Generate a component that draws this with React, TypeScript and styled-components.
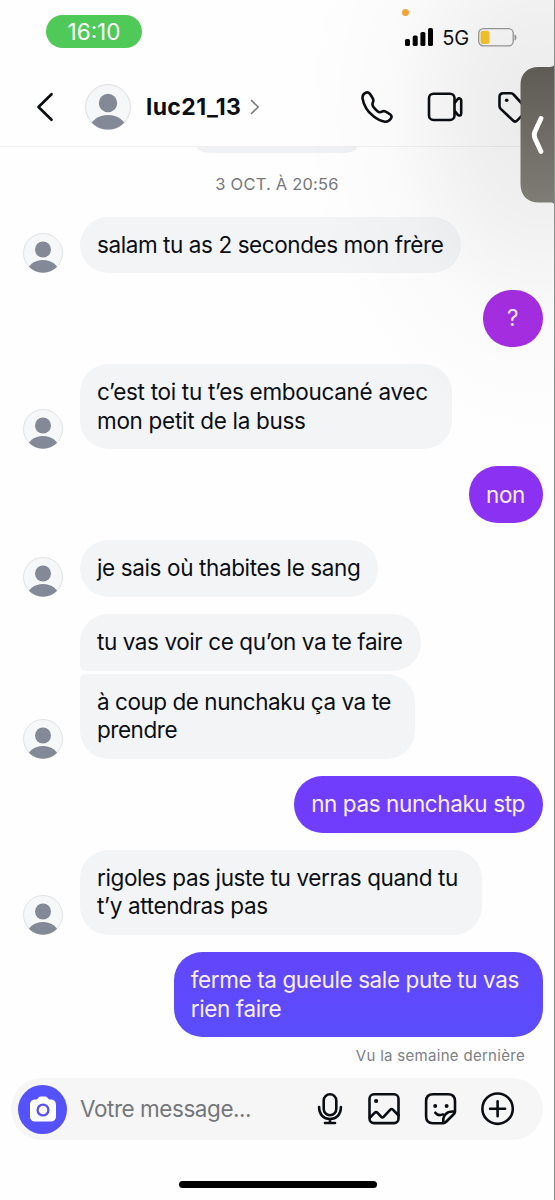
import React from "react";
import styled, { createGlobalStyle } from "styled-components";

const Global = createGlobalStyle`
  * { box-sizing: border-box; }
  body { margin: 0; background: #fefefe; }
`;

const Screen = styled.div`
  position: relative;
  width: 555px;
  height: 1200px;
  overflow: hidden;
  display: flex;
  flex-direction: column;
  background: #fefefe;
  border-right: 1px solid #8e8e8e;
  font-family: Inter, "Liberation Sans", sans-serif;
  color: #0b0f14;
`;

const StatusBar = styled.header`
  height: 66px;
  flex: none;
  display: flex;
  justify-content: space-between;
  align-items: flex-start;
  padding: 15px 37px 0 46px;
`;

const TimePill = styled.div`
  width: 96px;
  height: 33px;
  border-radius: 17px;
  background: #4fc957;
  color: #fff;
  font-size: 22.5px;
  line-height: 34px;
  text-align: center;
`;

const StatusIcons = styled.div`
  display: flex;
  align-items: center;
  height: 20px;
  margin-top: 12px;
`;

const Network = styled.span`
  font-size: 20px;
  line-height: 20px;
  letter-spacing: -0.2px;
  color: #111;
  margin: 1px 9px 0 9px;
`;

const ActivityDot = styled.i`
  position: absolute;
  left: 402px;
  top: 9px;
  width: 7px;
  height: 7px;
  border-radius: 50%;
  background: #f6a63a;
`;

const ChatHeader = styled.nav`
  height: 81px;
  flex: none;
  display: flex;
  align-items: center;
  border-bottom: 1px solid #f0f0f1;
  padding: 1px 0 0 36px;
`;

const HeaderAvatar = styled.div`
  width: 46px;
  height: 46px;
  margin-left: 31px;
`;

const Username = styled.h1`
  margin: 0 0 0 15px;
  width: 104px;
  font-size: 23px;
  font-weight: 700;
  line-height: 30px;
  letter-spacing: 0.4px;
  white-space: nowrap;
`;

const HeaderActions = styled.div`
  display: flex;
  align-items: center;
  gap: 32.5px;
  margin-left: 100px;
`;

const Thread = styled.main`
  flex: none;
  height: 930px;
  display: flex;
  flex-direction: column;
`;

const ClippedBubble = styled.div`
  width: 160px;
  height: 6px;
  margin-left: 197px;
  flex: none;
  border-radius: 0 0 14px 14px / 0 0 6px 6px;
  background: #f0f1f4;
`;

const DateLabel = styled.time`
  height: 63.5px;
  flex: none;
  padding-top: 20px;
  text-align: center;
  font-size: 16.5px;
  line-height: 22px;
  letter-spacing: 0.2px;
  color: #74777c;
`;

const Row = styled.div<{ $mine?: boolean; $gap?: number }>`
  display: flex;
  flex: none;
  align-items: flex-end;
  justify-content: ${(p) => (p.$mine ? "flex-end" : "flex-start")};
  padding: 0 11px 0 22.5px;
  margin-bottom: ${(p) => p.$gap ?? 17.4}px;
`;

const AvatarSlot = styled.div`
  width: 57.5px;
  height: 40px;
  flex: none;
`;

type Join = "top" | "bottom";

const Bubble = styled.div<{ $fill?: string; $join?: Join; $wrapped?: boolean }>`
  min-width: 60px;
  padding: 14.1px ${(p) => (p.$wrapped ? 24 : 18)}px 14.1px 17px;
  border-radius: 28.3px;
  ${(p) => p.$join === "bottom" && "border-bottom-left-radius: 6px;"}
  ${(p) => p.$join === "top" && "border-top-left-radius: 6px;"}
  background: ${(p) => p.$fill ?? "#f3f4f6"};
  color: ${(p) => (p.$fill ? "#fbeeff" : "#0b0f14")};
`;

const Line = styled.div<{ $track?: number; $center?: boolean }>`
  font-size: 22.5px;
  line-height: 28.3px;
  white-space: pre;
  text-align: ${(p) => (p.$center ? "center" : "left")};
  letter-spacing: ${(p) => p.$track ?? -0.4}px;
`;

const Seen = styled.div`
  padding-right: 29px;
  text-align: right;
  font-size: 15px;
  line-height: 20px;
  letter-spacing: 0.3px;
  margin-top: -8.5px;
  color: #7b7f86;
`;

const Composer = styled.footer`
  flex: none;
  height: 62px;
  margin: 1px 11px 0 11px;
  border-radius: 31px;
  background: #f6f6f6;
  display: flex;
  align-items: center;
  padding-left: 7px;
`;

const CameraButton = styled.div`
  width: 49px;
  height: 49px;
  border-radius: 50%;
  background: #5652fb;
  display: flex;
  align-items: center;
  justify-content: center;
`;

const Placeholder = styled.span`
  width: 243px;
  padding-left: 13px;
  font-size: 22.5px;
  line-height: 30px;
  letter-spacing: -0.45px;
  color: #74777c;
`;

const ComposerActions = styled.div`
  display: flex;
  align-items: center;
`;

const HomeIndicator = styled.div`
  width: 198px;
  height: 7px;
  flex: none;
  margin: 41px 0 0 179px;
  border-radius: 4px;
  background: #000;
`;

const Shade = styled.div`
  position: absolute;
  right: 0;
  top: 0;
  width: 260px;
  height: 500px;
  pointer-events: none;
  background: radial-gradient(ellipse 240px 335px at 245px 115px, rgba(0, 0, 0, 0.08), rgba(0, 0, 0, 0.056) 30%, rgba(0, 0, 0, 0.017) 62%, rgba(0, 0, 0, 0.004) 88%, transparent);
`;

const SideHandle = styled.div`
  position: absolute;
  right: -1px;
  top: 62px;
  width: 35px;
  height: 146px;
  svg { display: block; }
`;

const Avatar = ({ size }: { size: number }) => (
  <svg width={size} height={size} viewBox="0 0 46 46" display="block">
    <defs>
      <clipPath id={`face${size}`}>
        <circle cx="23" cy="23" r="22.6" />
      </clipPath>
    </defs>
    <circle cx="23" cy="23" r="22.4" fill="#f5f7f9" stroke="#dcdde0" strokeWidth="1" />
    <g fill="#838996" clipPath={`url(#face${size})`}>
      <circle cx="23" cy="19" r="9.2" />
      <ellipse cx="23" cy="45" rx="18" ry="14" />
    </g>
  </svg>
);

const stroke = {
  fill: "none",
  stroke: "#0a0e13",
  strokeWidth: 2.6,
  strokeLinecap: "round" as const,
  strokeLinejoin: "round" as const,
};

const Incoming = ({ lines, avatar = true, join, gap, track }: { lines: string[]; avatar?: boolean; join?: Join; gap?: number; track?: number }) => (
  <Row $gap={gap}>
    <AvatarSlot>{avatar && <Avatar size={40} />}</AvatarSlot>
    <Bubble $join={join} $wrapped={lines.length > 1}>
      {lines.map((l) => <Line key={l} $track={track}>{l}</Line>)}
    </Bubble>
  </Row>
);

const Outgoing = ({ lines, fill, track }: { lines: string[]; fill: string; track?: number }) => (
  <Row $mine>
    <Bubble $fill={fill} $wrapped={lines.length > 1}>
      {lines.map((l) => <Line key={l} $track={track} $center={lines.length === 1}>{l}</Line>)}
    </Bubble>
  </Row>
);

export default function App() {
  return (
    <Screen>
      <Global />
      <StatusBar>
        <TimePill>16:10</TimePill>
        <ActivityDot />
        <StatusIcons>
          <svg width="28" height="18" viewBox="0 0 28 18" fill="#000">
            <rect x="0" y="11" width="5" height="7" rx="1.6" />
            <rect x="7.7" y="7.5" width="5" height="10.5" rx="1.6" />
            <rect x="15.4" y="4" width="5" height="14" rx="1.6" />
            <rect x="23" y="0" width="5" height="18" rx="1.6" />
          </svg>
          <Network>5G</Network>
          <svg width="39" height="19" viewBox="0 0 39 19">
            <rect x="0.7" y="0.7" width="34.5" height="17.2" rx="4.6" fill="none" stroke="#9b9b9b" strokeWidth="1.3" />
            <rect x="2.5" y="2.7" width="9" height="13.2" rx="2.5" fill="#fac72e" />
            <path d="M36.5 6.2c2.6 1 2.6 5.4 0 6.4z" fill="#9b9b9b" />
          </svg>
        </StatusIcons>
      </StatusBar>
      <ChatHeader>
        <svg width="18" height="30" viewBox="0 0 18 30">
          <path d="M15.5 2.2 2.5 15l13 12.8" {...stroke} strokeWidth={2.7} />
        </svg>
        <HeaderAvatar><Avatar size={46} /></HeaderAvatar>
        <Username>luc21_13</Username>
        <svg width="10" height="16" viewBox="0 0 10 16">
          <path d="m1.6 1.6 6.6 6.4-6.6 6.4" {...stroke} stroke="#777" strokeWidth={1.5} />
        </svg>
        <HeaderActions>
          <svg width="34" height="34" viewBox="360 89.5 34 34">
            <path d="M365 92.600C363 93.800 362.200 95.600 362.600 98.200C363.800 105 367.800 111.200 373.200 115.600C377 118.700 381 120.700 385 121.200C387.500 121.500 389.300 120.400 390.800 118.300C392 116.600 391.800 115.300 390.300 114.100C388.900 113 387.400 111.900 385.700 111.100C384.300 110.400 383.200 110.500 381.900 111.200C380.100 112.200 379 112.100 377.500 110.800C375.900 109.400 374.500 107.900 373.300 106.200C372.200 104.600 372.100 103.500 372.900 101.900C373.600 100.500 373.600 99.400 372.800 98C371.900 96.300 371 94.800 369.900 93.400C368.600 91.800 366.900 91.500 365 92.600Z" {...stroke} />
          </svg>
          <svg width="38" height="34" viewBox="427 90 38 34">
            <rect x="429" y="93.7" width="25.5" height="26.3" rx="4.5" {...stroke} />
            <path d="M455 102.500l2.600-3.300c1.200-1.500 3.600-1 3.600 1.200v13c0 2.200-2.400 2.700-3.600 1.200l-2.600-3.300" {...stroke} />
          </svg>
          <svg width="34" height="34" viewBox="497 89.5 34 34">
            <path d="M499.500 96.500v9c0 1.200.3 2 1.200 2.900l12.600 11.800c1.200 1.100 2.600 1.100 3.700 0l9-9c1.100-1.200 1.100-2.500 0-3.700l-12-13c-.8-.9-1.700-1.800-2.900-1.800h-7.700c-2.400 0-3.900 1.400-3.900 3.800z" {...stroke} />
            <circle cx="506.700" cy="99.700" r="1.8" fill="#0a0e13" />
          </svg>
        </HeaderActions>
      </ChatHeader>
      <Thread>
        <ClippedBubble />
        <DateLabel>3 OCT. À 20:56</DateLabel>
        <Incoming lines={["salam tu as 2 secondes mon frère"]} track={-0.42} />
        <Outgoing lines={["?"]} fill="#a52ee2" />
        <Incoming lines={["c’est toi tu t’es emboucané avec", "mon petit de la buss"]} track={-0.3} />
        <Outgoing lines={["non"]} fill="#8b31f2" />
        <Incoming lines={["je sais où thabites le sang"]} track={-0.38} />
        <Incoming lines={["tu vas voir ce qu’on va te faire"]} avatar={false} join="bottom" gap={3.4} track={-0.42} />
        <Incoming lines={["à coup de nunchaku ça va te", "prendre"]} join="top" track={-0.46} />
        <Outgoing lines={["nn pas nunchaku stp"]} fill="#6f3dfb" />
        <Incoming lines={["rigoles pas juste tu verras quand tu", "t’y attendras pas"]} track={-0.38} />
        <Outgoing lines={["ferme ta gueule sale pute tu vas", "rien faire"]} fill="linear-gradient(#6246fb, #5b4dfc)" track={-0.39} />
        <Seen>Vu la semaine dernière</Seen>
      </Thread>
      <Composer>
        <CameraButton>
          <svg width="28" height="26" viewBox="0 0 28 26">
            <path d="M9 2.300C9.800 1 10.800.5 12 .5h4c1.200 0 2.200.5 3 1.800.6.900 1.200 1.200 2.200 1.200 3.800 0 5.800 1.800 5.800 5.500v11c0 3.600-1.800 5.500-5.500 5.500h-15C2.800 25.500 1 23.600 1 20V9c0-3.700 2-5.500 5.800-5.500 1 0 1.600-.3 2.200-1.200z" fill="#fff" />
            <circle cx="14" cy="14" r="5.400" fill="#fff" stroke="#5652fb" strokeWidth="2.3" />
          </svg>
        </CameraButton>
        <Placeholder>Votre message...</Placeholder>
        <ComposerActions>
          <svg width="210" height="50" viewBox="310 1084 210 50">
            <rect x="323.7" y="1094.2" width="12.6" height="21" rx="6.3" {...stroke} />
            <path d="M319.100 1107c0 7.500 4.500 12 10.900 12s10.900-4.500 10.900-12M330 1119.500v3.500M325 1123h10" {...stroke} />
            <rect x="369.5" y="1094.3" width="29" height="28.8" rx="4.5" {...stroke} />
            <path d="M370 1117.500l4.600-4.600c1-1 2-1 3 0l3.600 3.900c.8.900 1.600.9 2.400 0l6.500-7c1-1 2-1 3 0l5.500 5.700" {...stroke} />
            <circle cx="376.1" cy="1101" r="2.1" fill="#0a0e13" />
            <path d="M443.500 1123.200h-10.700c-4.600 0-6.700-2.400-6.700-7v-15c0-4.600 2.400-6.900 7-6.900h15c4.600 0 6.900 2.400 6.900 7v10.300c0 1-.4 1.700-1.100 2.400l-8 8c-.7.800-1.300 1.200-2.400 1.200zM443.300 1122.800c-.8-7 2.800-12 11-11.300M435.300 1112.700c1.700 2.300 4.600 2.900 7.600 1.700" {...stroke} />
            <circle cx="435.2" cy="1106" r="2" fill="#0a0e13" />
            <circle cx="446.6" cy="1106" r="2" fill="#0a0e13" />
            <circle cx="497.6" cy="1108.7" r="15.2" {...stroke} />
            <path d="M497.600 1101.200v15M490.100 1108.700h15" {...stroke} />
          </svg>
        </ComposerActions>
      </Composer>
      <HomeIndicator />
      <Shade />
      <SideHandle>
        <svg width="35" height="146" viewBox="520 62 35 146">
          <defs>
            <linearGradient id="handle" x1="0" y1="0" x2="0" y2="1">
              <stop offset="0" stopColor="#5d5a54" />
              <stop offset="1" stopColor="#7f7e76" />
            </linearGradient>
          </defs>
          <path d="M555 62c-.5 4-2 5-5 5h-11c-12 0-18.500 7-18.500 18v99c0 11 6.500 18.500 18.500 18.500h11c3 0 4.500 1 5 4z" fill="url(#handle)" />
          <path d="M541 118.500 535 131.500q-1.500 3.500 0 7l6 13" fill="none" stroke="#fff" strokeWidth="4.8" strokeLinecap="round" strokeLinejoin="round" />
        </svg>
      </SideHandle>
    </Screen>
  );
}
